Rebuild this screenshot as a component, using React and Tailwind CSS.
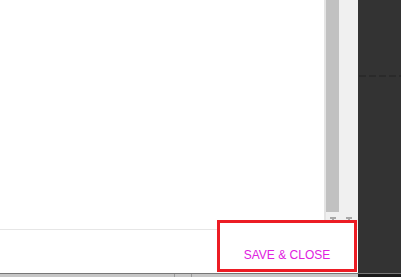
import React from 'react'

function ScrollArrow() {
  return (
    <div className="flex flex-col items-center">
      <div className="w-[6px] h-[2px] bg-[#a8a8a8]" />
      <div className="w-[2px] h-[2px] bg-[#a8a8a8]" />
    </div>
  )
}

export default function App() {
  return (
    <div className="w-[401px] h-[277px] flex flex-col overflow-hidden bg-white" style={{ fontFamily: '"Liberation Sans", Arial, sans-serif' }}>
      <div className="h-[273px] flex">

        {/* Editor column */}
        <div className="relative w-[358px] shrink-0 flex flex-col">
          <div className="h-[229px] flex">
            <div className="flex-1 bg-white" />
            <div className="w-[2px] bg-[#e4e4e4]" />
            <div className="w-[13px] bg-[#f0f0f0] flex flex-col items-center">
              <div className="w-full h-[212px] bg-[#c1c1c1]" />
              <div className="mt-[5px]"><ScrollArrow /></div>
            </div>
            <div className="w-[19px] bg-[#f0f0f0] flex flex-col items-center">
              <div className="mt-[217px]"><ScrollArrow /></div>
            </div>
          </div>
          <div className="flex-1 border-t border-[#e6e6e6] bg-white" />

          {/* Highlighted button */}
          <div className="absolute left-[217px] top-[220px] w-[140px] h-[52px] border-[3px] border-[#ec1c24] bg-white flex justify-center pt-[25px]">
            <span className="text-[12px] leading-[14px] text-[#e020e0]">SAVE &amp; CLOSE</span>
          </div>
        </div>

        {/* Dark side panel */}
        <div className="flex-1 min-w-0 overflow-hidden bg-[#333333] flex flex-col">
          <div className="mt-[75px] ml-[1px] flex gap-[3px]">
            <div className="w-[7px] h-[2px] shrink-0 bg-[#2a2a2a]" />
            <div className="w-[7px] h-[2px] shrink-0 bg-[#2a2a2a]" />
            <div className="w-[7px] h-[2px] shrink-0 bg-[#2a2a2a]" />
            <div className="w-[7px] h-[2px] shrink-0 bg-[#2a2a2a]" />
            <div className="w-[7px] h-[2px] shrink-0 bg-[#2a2a2a]" />
          </div>
        </div>
      </div>

      {/* Bottom strip */}
      <div className="h-[4px] flex border-t border-[#777777] bg-[#c6c6c6]">
        <div className="w-[174px]" />
        <div className="w-[1px] bg-[#9a9a9a]" />
        <div className="w-[16px]" />
        <div className="w-[1px] bg-[#9a9a9a]" />
        <div className="w-[166px]" />
        <div className="flex-1 bg-[#1a1a1a]" />
      </div>
    </div>
  )
}
